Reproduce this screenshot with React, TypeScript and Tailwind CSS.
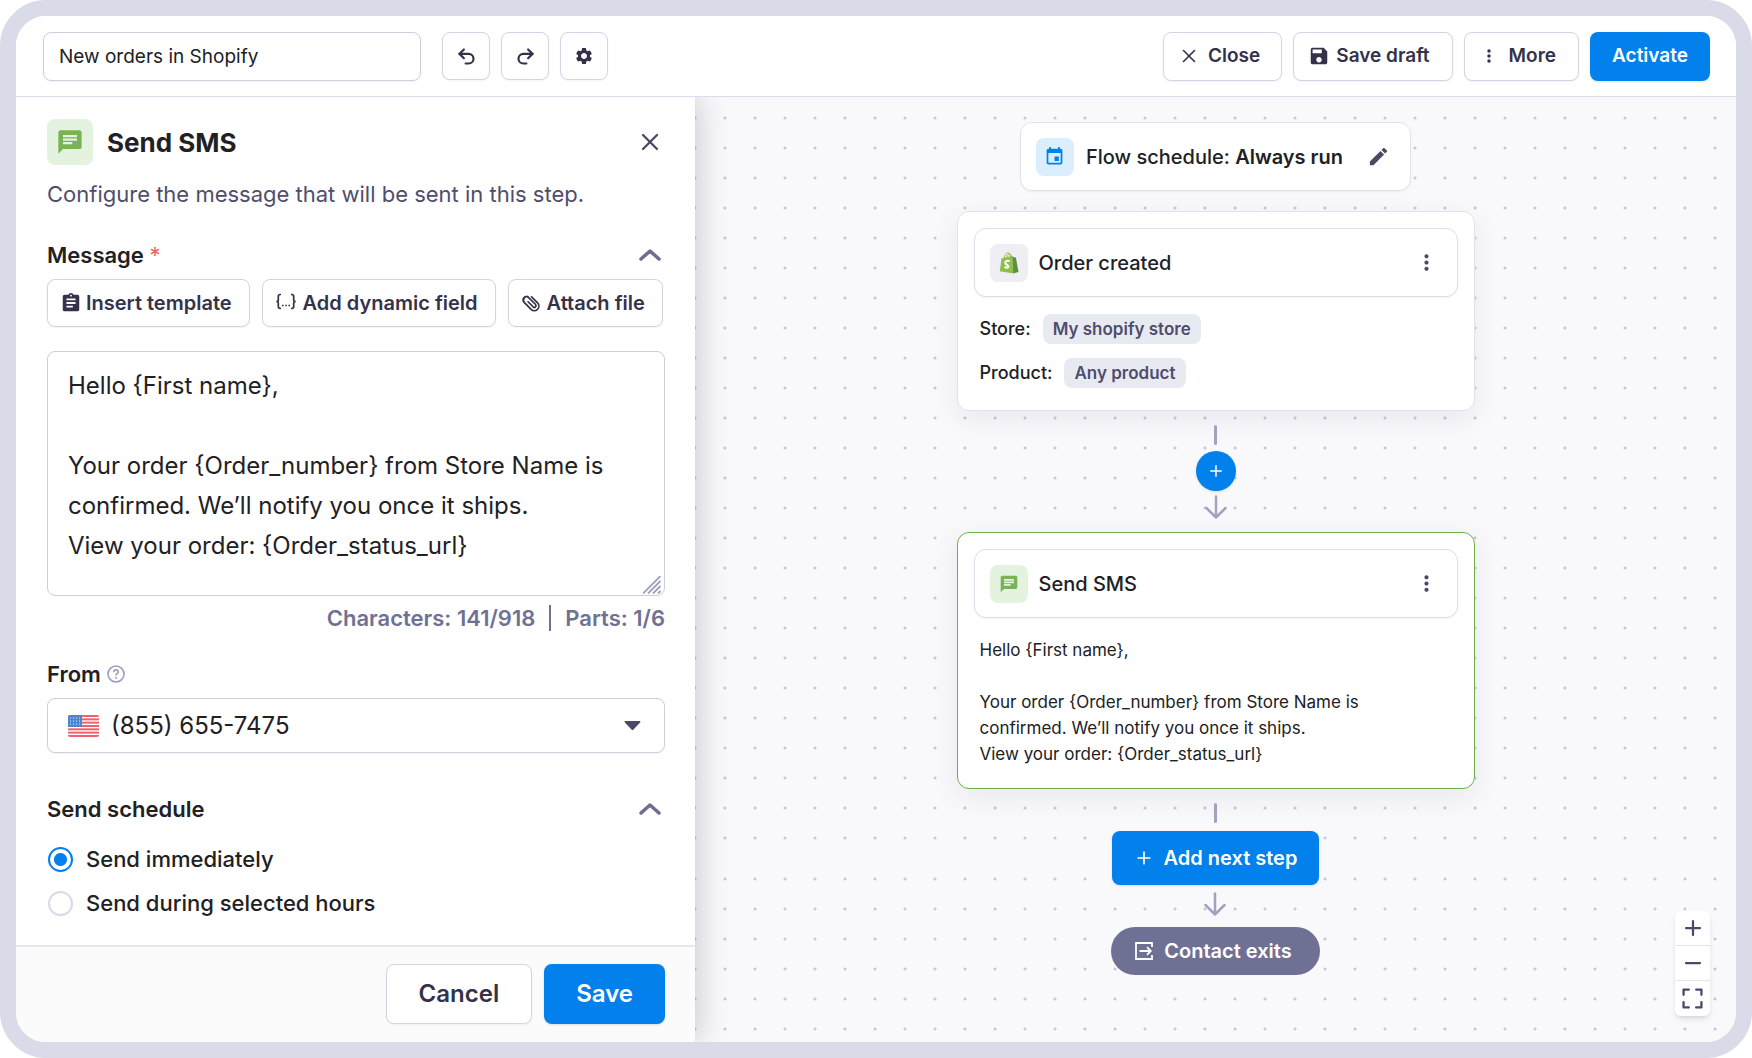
import React, { useState } from "react";
import { Minus, Plus, Redo2, Undo2, X } from "lucide-react";
import {
  MdAssignment,
  MdChat,
  MdEdit,
  MdEvent,
  MdMoreVert,
  MdSave,
  MdSettings,
} from "react-icons/md";

const outlineButton =
  "flex items-center justify-center rounded-lg border border-[#d3d3e6] bg-white font-semibold text-[#34324a] shadow-xs";
const primaryButton =
  "flex items-center justify-center rounded-lg bg-[#0280ec] font-semibold text-white shadow-sm";

const message =
  "Hello {First name},\n\nYour order {Order_number} from Store Name is confirmed. We’ll notify you once it ships.\nView your order: {Order_status_url}";

function ShopifyIcon() {
  return (
    <svg width="20" height="22" viewBox="0 0 20 22" aria-hidden="true">
      <path d="M5.2 6C5.6 2.800 7.300.8 9 .8c1.600 0 2.400 1.600 2.500 4.200M7.800 5.500c.5-2.300 1.700-3.600 2.900-3.500 1.100.1 1.600 1.300 1.700 2.600" fill="none" stroke="#95bf47" strokeWidth="1" />
      <path d="M2.600 6.300 13.200 4l1.100 17.500L.8 19.200z" fill="#8fbf4a" />
      <path d="m13.200 4 1.500 1.300 2.200.3 2.600 14.300-5.200 1.600z" fill="#5e8e3e" />
      <path d="M10.800 9.200c-2.300-1-4.700-.3-4.500 1.700.2 1.900 3.200 1.900 3.200 3.700 0 1.600-2.200 1.500-4 .2" fill="none" stroke="#fff" strokeWidth="2" />
    </svg>
  );
}

function FlagIcon() {
  const rows = [0, 1, 2, 3, 4, 5, 6];
  return (
    <svg width="31" height="22" viewBox="0 0 31 22" aria-hidden="true">
      <clipPath id="flag">
        <rect width="31" height="22" rx="2" />
      </clipPath>
      <g clipPath="url(#flag)">
        <rect width="31" height="22" fill="#fff" />
        {rows.map((r) => (
          <rect key={r} y={r * 3.33} width="31" height="2" fill="#f0616d" />
        ))}
        <rect width="14" height="12" fill="#4a86d4" />
        {[2, 5, 8, 11].map((x) =>
          [2, 5, 8].map((y) => <circle key={`${x}-${y}`} cx={x + 0.5} cy={y + 1} r="0.6" fill="#fff" />),
        )}
      </g>
    </svg>
  );
}

function BracesIcon() {
  return (
    <svg width="22" height="20" viewBox="0 0 22 20" fill="none" stroke="currentColor" strokeWidth="1.7" aria-hidden="true">
      <path d="M6 1.500H5.200c-1.400 0-1.900.7-1.900 1.900v3.300c0 1.200-.6 1.800-2 1.800 1.400 0 2 .6 2 1.800v3.300c0 1.200.5 1.900 1.900 1.900H6M16 1.500h.8c1.400 0 1.900.7 1.900 1.900v3.300c0 1.200.6 1.800 2 1.800-1.400 0-2 .6-2 1.800v3.300c0 1.200-.5 1.900-1.900 1.900H16" />
      <path d="M7 12.500h1.600M10.200 12.500h1.600M13.400 12.500H15" />
    </svg>
  );
}

function ClipIcon() {
  return (
    <svg className="-rotate-45" width="20" height="20" viewBox="0 0 20 20" fill="none" stroke="currentColor" strokeWidth="1.700" strokeLinecap="round" aria-hidden="true">
      <path d="M14.800 6v8.500a4.600 4.600 0 0 1-9.200 0V4.500a3.800 3.800 0 0 1 6.800-1.200M5.600 6V4.500a3.300 3.300 0 0 1 6.600 0v9.500a1.900 1.900 0 0 1-3.400 1.200V7" />
    </svg>
  );
}

function ExitIcon() {
  return (
    <svg width="20" height="20" viewBox="0 0 20 20" fill="none" stroke="currentColor" strokeWidth="1.800" aria-hidden="true">
      <path d="M18 6V2H2v16h16v-4M5.500 10h11M13 6.200l3.800 3.800-3.800 3.800" />
    </svg>
  );
}

function Chevron() {
  return (
    <svg width="24" height="14" viewBox="0 0 24 14" fill="none" stroke="currentColor" strokeWidth="3.500" strokeLinecap="round" strokeLinejoin="round" aria-hidden="true">
      <path d="M3 11l9-8 9 8" />
    </svg>
  );
}

function Arrow() {
  return (
    <svg width="24" height="24" viewBox="0 0 24 24" fill="none" stroke="#a0a2c0" strokeWidth="2.500" strokeLinecap="round" strokeLinejoin="round" aria-hidden="true">
      <path d="M12 1.500v21M2.500 13l9.500 9.500 9.500-9.500" />
    </svg>
  );
}

function Line() {
  return <div className="h-5 w-[3px] rounded-full bg-[#a0a2c0]" />;
}

function NodeHeader({ icon, tint, title }: { icon: React.ReactNode; tint: string; title: string }) {
  return (
    <div className="flex h-[69px] items-center rounded-xl border border-[#dedeeb] bg-white pr-[18px] pl-[15px] shadow-xs">
      <span className={`flex size-[38px] items-center justify-center rounded-lg ${tint}`}>{icon}</span>
      <h3 className="ml-[11px] flex-1 text-xl font-medium">{title}</h3>
      <button type="button" aria-label={`${title} options`} className="text-[#4b4868]">
        <MdMoreVert size={25} />
      </button>
    </div>
  );
}

function Property({ name, value }: { name: string; value: string }) {
  return (
    <div className="flex items-center gap-3">
      <dt>{name}:</dt>
      <dd className="rounded-lg bg-[#e8eaf2] px-2.5 text-[17px] leading-[30px] font-semibold text-[#504d6c]">{value}</dd>
    </div>
  );
}

export default function App() {
  const [text, setText] = useState(message);
  const [schedule, setSchedule] = useState("now");
  const options = [
    { id: "now", label: "Send immediately" },
    { id: "hours", label: "Send during selected hours" },
  ];

  return (
    <div className="min-h-screen bg-white font-[Inter,sans-serif] text-[#212124]">
      <div className="flex min-h-screen flex-col overflow-hidden rounded-[46px] border-16 border-[#d9dbe9] bg-white">
        <header className="relative z-20 flex h-[81px] shrink-0 items-center justify-between border-b border-[#dcdcec] bg-white pr-[26px] pl-[27px]">
          <div className="flex items-center gap-[11px]">
            <input
              aria-label="Flow name"
              defaultValue="New orders in Shopify"
              className="mr-2.5 h-[49px] w-[378px] rounded-lg border border-[#cbd0dc] px-[15px] text-[19px] shadow-xs outline-none"
            />
            <button type="button" aria-label="Undo" className={`${outlineButton} size-12`}>
              <Undo2 size={21} strokeWidth={2.5} />
            </button>
            <button type="button" aria-label="Redo" className={`${outlineButton} size-12`}>
              <Redo2 size={21} strokeWidth={2.5} />
            </button>
            <button type="button" aria-label="Settings" className={`${outlineButton} size-12`}>
              <MdSettings size={20} />
            </button>
          </div>
          <div className="flex gap-[11px] text-[19px]">
            <button type="button" className={`${outlineButton} h-[49px] gap-2 pr-[21px] pl-3.5`}>
              <X size={22} strokeWidth={1.75} />
              Close
            </button>
            <button type="button" className={`${outlineButton} h-[49px] gap-1.5 pr-[22px] pl-3.5`}>
              <MdSave size={22} />
              Save draft
            </button>
            <button type="button" className={`${outlineButton} h-[49px] gap-2.5 pr-[22px] pl-3.5`}>
              <MdMoreVert size={20} />
              More
            </button>
            <button type="button" className={`${primaryButton} h-[49px] px-[22px]`}>
              Activate
            </button>
          </div>
        </header>

        <div className="flex flex-1">
          <aside className="relative z-10 flex w-[679px] shrink-0 flex-col bg-white shadow-[4px_0_28px_rgba(40,40,60,0.22)]">
            <div className="flex-1 pt-[22px] pr-[30px] pl-[31px]">
              <div className="flex items-center pr-px">
                <span className="flex size-[46px] items-center justify-center rounded-lg bg-[#e4f3e0] text-[#79b356]">
                  <MdChat size={28} />
                </span>
                <h1 className="ml-3.5 flex-1 text-[26px] font-bold">Send SMS</h1>
                <button type="button" aria-label="Close panel" className="text-[#4b4868]">
                  <X size={28} strokeWidth={2} />
                </button>
              </div>
              <p className="mt-[13px] text-[22px] leading-8 text-[#504d6c]">Configure the message that will be sent in this step.</p>

              <div className="mt-[29px] flex h-8 items-center justify-between pr-[3px]">
                <label htmlFor="message" className="text-[22px] font-semibold">
                  Message <span className="font-normal text-[#f0605c]">*</span>
                </label>
                <button type="button" aria-label="Collapse message" className="text-[#6c6c94]">
                  <Chevron />
                </button>
              </div>
              <div className="mt-2 flex gap-3 text-xl">
                <button type="button" className={`${outlineButton} h-12 gap-1 px-[17px] pl-3`}>
                  <MdAssignment size={22} />
                  Insert template
                </button>
                <button type="button" className={`${outlineButton} h-12 gap-1.5 px-[17px] pl-3`}>
                  <BracesIcon />
                  Add dynamic field
                </button>
                <button type="button" className={`${outlineButton} h-12 gap-1.5 px-[17px] pl-3`}>
                  <ClipIcon />
                  Attach file
                </button>
              </div>
              <div className="relative mt-6 h-[245px]">
                <textarea
                  id="message"
                  value={text}
                  onChange={(e) => setText(e.target.value)}
                  className="block size-full resize-none overflow-hidden rounded-lg border border-[#cbd0dc] px-5 py-3.5 text-2xl leading-10 outline-none"
                />
                <svg className="pointer-events-none absolute right-1 bottom-0.5" width="18" height="18" viewBox="0 0 18 18" fill="none" stroke="#9c9ec0" strokeWidth="1.800" aria-hidden="true">
                  <path d="M0 17.500 17.500 0M5 17.500 17.500 5M10 17.500l7.500-7.500M15 17.500l2.500-2.500" />
                </svg>
              </div>
              <div className="mt-1.5 flex h-8 items-center justify-end gap-3.5 text-[22px] font-semibold text-[#6f7194]">
                <span>Characters: 141/918</span>
                <span className="h-[26px] w-0.5 bg-[#6f7194]" />
                <span>Parts: 1/6</span>
              </div>

              <div className="mt-6 flex h-8 items-center gap-1.5">
                <label htmlFor="sender" className="text-[22px] font-semibold">
                  From
                </label>
                <button type="button" aria-label="About the sender" className="text-[#9c9ec0]">
                  <svg width="18" height="18" viewBox="0 0 18 18" fill="none" stroke="currentColor" strokeWidth="1.600" aria-hidden="true">
                    <circle cx="9" cy="9" r="8" />
                    <path d="M6.700 7.200C6.900 4 11.500 4.200 11.300 7c-.1 1.600-2.300 1.800-2.300 3.600M9 12v1.800" />
                  </svg>
                </button>
              </div>
              <div className="relative mt-2 flex h-[55px] items-center">
                <select id="sender" className="size-full appearance-none rounded-lg border border-[#cbd0dc] bg-white pl-[63px] text-2xl shadow-xs outline-none">
                  <option>(855) 655-7475</option>
                </select>
                <span className="pointer-events-none absolute left-[21px]">
                  <FlagIcon />
                </span>
                <svg className="pointer-events-none absolute right-6" width="17" height="9" viewBox="0 0 17 9" fill="#4b4868" aria-hidden="true">
                  <path d="M1.500 0h14c1 0 1.200.8.600 1.500L9.500 8.400a1.400 1.400 0 0 1-2 0L.9 1.500C.3.800.500 0 1.500 0z" />
                </svg>
              </div>

              <div className="mt-10 flex h-8 items-center justify-between pr-[3px]">
                <h2 className="text-[22px] font-semibold">Send schedule</h2>
                <button type="button" aria-label="Collapse send schedule" className="text-[#6c6c94]">
                  <Chevron />
                </button>
              </div>
              <div className="mt-[18px] mb-6 flex flex-col gap-3">
                {options.map((o) => (
                  <label key={o.id} className="flex h-8 items-center gap-[13px] text-[22px] font-medium">
                    <input
                      type="radio"
                      name="schedule"
                      checked={schedule === o.id}
                      onChange={() => setSchedule(o.id)}
                      className="ml-px size-[25px] appearance-none rounded-full border-2 border-[#dadaea] bg-white shadow-xs checked:border-[#0280ec] checked:bg-[radial-gradient(circle,#0280ec_6px,white_7px)]"
                    />
                    {o.label}
                  </label>
                ))}
              </div>
            </div>
            <footer className="flex h-[97px] shrink-0 items-center justify-end gap-3 border-t-2 border-[#e6e6f0] bg-[#fbfbfc] pr-[30px] pb-0.5 text-2xl">
              <button type="button" className={`${outlineButton} h-[60px] px-8`}>
                Cancel
              </button>
              <button type="button" className={`${primaryButton} h-[60px] px-8`}>
                Save
              </button>
            </footer>
          </aside>

          <main className="relative flex flex-1 flex-col items-center bg-[#f9f9fc] pt-[25px]">
            <div className="absolute inset-0 flex flex-col" aria-hidden="true">
              <div className="h-[760px] bg-[radial-gradient(circle_at_15px_15px,#c9c8dc_1px,transparent_2px)] bg-size-[30px_30px] bg-position-[15px_6px]" />
              <div className="flex-1 bg-[radial-gradient(circle_at_15px_15px,#c9c8dc_1px,transparent_2px)] bg-size-[30px_30px] bg-position-[15px_7px]" />
            </div>

            <section className="relative flex h-[69px] items-center rounded-xl border border-[#e2e2ee] bg-white pr-4 pl-[15px] shadow-xs">
              <span className="flex size-[38px] items-center justify-center rounded-lg bg-[#dbeefd] text-[#0280ec]">
                <MdEvent size={21} />
              </span>
              <p className="ml-3 text-xl font-medium">
                Flow schedule: <strong className="font-semibold">Always run</strong>
              </p>
              <button type="button" aria-label="Edit flow schedule" className="ml-5 p-1 text-[#4b4868]">
                <MdEdit size={23} />
              </button>
            </section>

            <section className="relative mt-5 w-[518px] rounded-xl border border-[#e2e2ee] bg-white px-4 pt-4 pb-[22px] shadow-[0_8px_28px_rgba(40,40,60,0.08)]">
              <NodeHeader icon={<ShopifyIcon />} tint="bg-[#eeeef4]" title="Order created" />
              <dl className="mt-[17px] flex flex-col gap-3.5 pl-1.5 text-lg font-medium">
                <Property name="Store" value="My shopify store" />
                <Property name="Product" value="Any product" />
              </dl>
            </section>

            <div className="relative flex flex-col items-center pt-3.5 pb-[13px]">
              <Line />
              <button type="button" aria-label="Insert step" className="mt-1.5 mb-1 flex size-10 items-center justify-center rounded-full bg-[#0280ec] text-white shadow-sm">
                <Plus size={18} strokeWidth={2} />
              </button>
              <Arrow />
            </div>

            <section className="relative w-[518px] rounded-xl border border-[#6fae49] bg-white px-4 pt-4 pb-[21px] shadow-[0_8px_28px_rgba(40,40,60,0.08)]">
              <NodeHeader icon={<MdChat size={20} className="text-[#79b356]" />} tint="bg-[#e4f3e0]" title="Send SMS" />
              <p className="mt-[19px] pr-16 pl-1.5 text-[17px] leading-[26px] whitespace-pre-wrap">{text}</p>
            </section>

            <div className="relative flex flex-col items-center">
              <div className="pt-3.5 pb-2">
                <Line />
              </div>
              <button type="button" className={`${primaryButton} h-[54px] gap-2.5 px-[22px] text-xl`}>
                <Plus size={20} strokeWidth={2} />
                Add next step
              </button>
              <div className="pt-[7px] pb-[11px]">
                <Arrow />
              </div>
              <div className="flex h-12 items-center gap-2.5 rounded-full bg-[#6f7194] pr-7 pl-[23px] text-xl font-semibold text-white">
                <ExitIcon />
                Contact exits
              </div>
            </div>

            <div className="absolute right-[26px] bottom-[26px] flex w-[35px] flex-col divide-y divide-[#e4e4ee] rounded-md bg-white text-[#4b4868] shadow-md">
              <button type="button" aria-label="Zoom in" className="flex h-[35px] items-center justify-center">
                <Plus size={24} strokeWidth={2.25} />
              </button>
              <button type="button" aria-label="Zoom out" className="flex h-[35px] items-center justify-center">
                <Minus size={24} strokeWidth={2.25} />
              </button>
              <button type="button" aria-label="Fit view" className="flex h-[35px] items-center justify-center">
                <svg width="21" height="21" viewBox="0 0 20 20" fill="none" stroke="currentColor" strokeWidth="2.200" strokeLinejoin="round" strokeLinecap="round" aria-hidden="true">
                  <path d="M1.500 6.500v-5h5M13.500 1.500h5v5M18.500 13.500v5h-5M6.500 18.500h-5v-5" />
                </svg>
              </button>
            </div>
          </main>
        </div>
      </div>
    </div>
  );
}
